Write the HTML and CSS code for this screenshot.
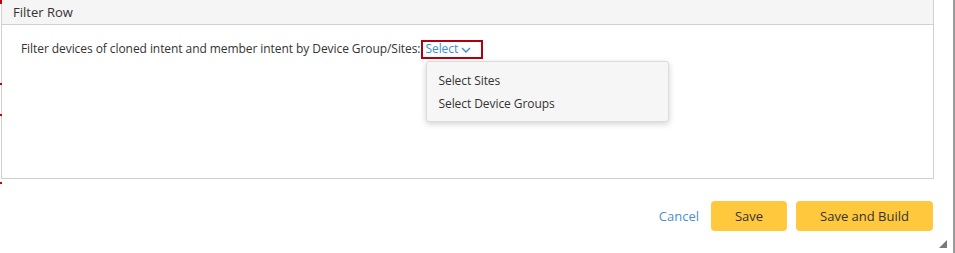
FILE: index.html
```html
<!DOCTYPE html>
<html>
<head>
<meta charset="utf-8">
<link rel="stylesheet" href="styles.css">
</head>
<body>
<div class="page">
  <span class="mark m1"></span>
  <span class="mark m2"></span>
  <span class="mark m3"></span>
  <span class="mark m4"></span>
  <div class="main">
    <section class="panel">
      <div class="panel-head">Filter Row</div>
      <div class="panel-body">
        <div class="filter-line">
          <span class="label">Filter devices of cloned intent and member intent by Device Group/Sites:</span>
          <span class="select-wrap">
            <span class="select">Select
              <svg class="chev" width="10" height="6" viewBox="0 0 10 6"><path d="M1 1l4 4 4-4" fill="none" stroke="#3b8fd6" stroke-width="1.4"/></svg>
            </span>
            <div class="menu">
              <div class="menu-item">Select Sites</div>
              <div class="menu-item">Select Device Groups</div>
            </div>
          </span>
        </div>
      </div>
    </section>
    <div class="actions">
      <a class="cancel">Cancel</a>
      <button class="btn btn-save">Save</button>
      <button class="btn btn-build">Save and Build</button>
    </div>
    <svg class="grip" width="8" height="8" viewBox="0 0 8 8"><path d="M8 0V8H0Z" fill="#7a7a7a"/></svg>
  </div>
  <div class="scrollline"></div>
</div>
</body>
</html>
```
FILE: styles.css
```css
* { box-sizing: border-box; }
html, body { margin: 0; padding: 0; background: #fff; }
body {
  font-family: "Open Sans", "Noto Sans", sans-serif;
  font-size: 13px;
  color: #333;
}
.page {
  position: relative;
  width: 955px;
  height: 253px;
  display: flex;
}
.main {
  position: relative;
  width: 953px;
  padding-left: 1px;
}
.panel {
  width: 933px;
  height: 179px;
  border: 1px solid #d0d0d0;
  border-top: none;
  display: flex;
  flex-direction: column;
}
.panel-head {
  height: 25px;
  background: #f5f5f5;
  border-bottom: 1px solid #d0d0d0;
  padding: 3px 0 0 11px;
  font-size: 13px;
  color: #333;
}
.panel-body {
  flex: 1;
  padding: 15px 0 0 19px;
  font-size: 12px;
  letter-spacing: -0.07px;
}
.filter-line {
  display: flex;
  align-items: flex-start;
  line-height: 18px;
}
.select-wrap {
  position: relative;
  margin-left: 1px;
}
.select {
  display: inline-flex;
  align-items: center;
  gap: 3px;
  height: 19px;
  padding: 0 10px 0 2px;
  border: 2px solid #b0000f;
  color: #3b8fd6;
  margin-top: -1px;
}
.chev { margin-top: 1px; }
.menu {
  position: absolute;
  left: 5px;
  top: 21px;
  width: 243px;
  padding: 7px 0 6px;
  background: #f6f6f6;
  border: 1px solid #dcdcdc;
  border-radius: 3px;
  box-shadow: 0 2px 6px rgba(0,0,0,0.18);
  z-index: 2;
}
.menu-item {
  padding: 0 11px;
  height: 23px;
  line-height: 23px;
  white-space: nowrap;
  color: #333;
}
.actions {
  display: flex;
  justify-content: flex-end;
  align-items: center;
  width: 932px;
  margin-top: 22px;
}
.cancel {
  color: #4a8fd0;
  margin-right: 12px;
  cursor: pointer;
}
.btn {
  font-family: inherit;
  font-size: 13px;
  color: #333;
  background: #ffc83d;
  border: none;
  border-radius: 4px;
  height: 30px;
  cursor: pointer;
}
.btn-save { width: 76px; margin-right: 9px; }
.btn-build { width: 137px; }
.grip {
  position: absolute;
  right: 6px;
  bottom: 5px;
}
.scrollline {
  width: 2px;
  height: 253px;
  background: #9a9a9a;
}
.mark {
  position: absolute;
  left: 0;
  width: 2px;
  background: #c00;
  z-index: 3;
}
.m1 { top: 0; height: 4px; }
.m2 { top: 83px; height: 2px; }
.m3 { top: 114px; height: 2px; }
.m4 { top: 182px; height: 2px; }
```
